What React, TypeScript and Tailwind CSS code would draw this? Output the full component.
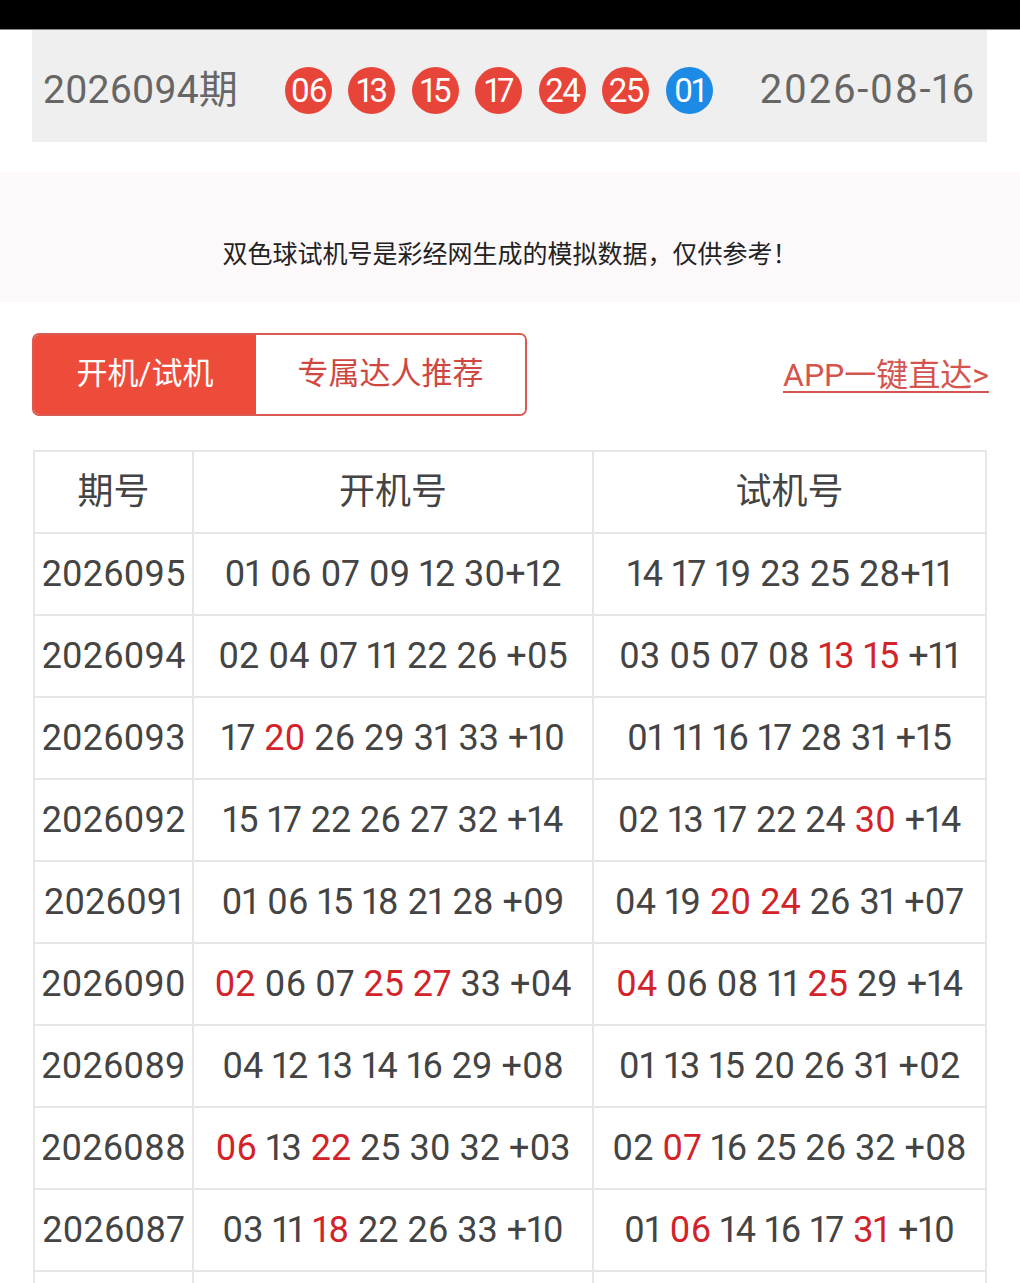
import React from "react";

type Cell = { n: string; hot?: boolean };

const font = { fontFamily: 'Roboto, "Noto Sans CJK SC", sans-serif' };

const reds = ["06", "13", "15", "17", "24", "25"];

function nums(s: string): Cell[] {
  // "*" marks a hit number
  return s.split(" ").map((t) => (t.startsWith("*") ? { n: t.slice(1), hot: true } : { n: t }));
}

const rows: { issue: string; open: Cell[]; test: Cell[] }[] = [
  { issue: "2026095", open: nums("01 06 07 09 12 30+12"), test: nums("14 17 19 23 25 28+11") },
  { issue: "2026094", open: nums("02 04 07 11 22 26 +05"), test: nums("03 05 07 08 *13 *15 +11") },
  { issue: "2026093", open: nums("17 *20 26 29 31 33 +10"), test: nums("01 11 16 17 28 31 +15") },
  { issue: "2026092", open: nums("15 17 22 26 27 32 +14"), test: nums("02 13 17 22 24 *30 +14") },
  { issue: "2026091", open: nums("01 06 15 18 21 28 +09"), test: nums("04 19 *20 *24 26 31 +07") },
  { issue: "2026090", open: nums("*02 06 07 *25 *27 33 +04"), test: nums("*04 06 08 11 *25 29 +14") },
  { issue: "2026089", open: nums("04 12 13 14 16 29 +08"), test: nums("01 13 15 20 26 31 +02") },
  { issue: "2026088", open: nums("*06 13 *22 25 30 32 +03"), test: nums("02 *07 16 25 26 32 +08") },
  { issue: "2026087", open: nums("03 11 *18 22 26 33 +10"), test: nums("01 *06 14 16 17 *31 +10") },
];

function NumLine({ cells }: { cells: Cell[] }) {
  return (
    <span className="whitespace-pre">
      {cells.map((c, i) => (
        <span key={i} className={c.hot ? "text-[#d3232a]" : ""}>
          {c.n}
          {i < cells.length - 1 ? " " : ""}
        </span>
      ))}
    </span>
  );
}

function Ball({ n, blue }: { n: string; blue?: boolean }) {
  return (
    <div
      className={`w-[47px] h-[47px] rounded-full flex items-center justify-center text-white text-[33px] leading-none tracking-[-1.5px] ${
        blue ? "bg-[#1d8ae6]" : "bg-[#e8453a]"
      }`}
    >
      {n}
    </div>
  );
}

export default function App() {
  const cell = "h-[82px] border-r-2 border-b-2 border-[#e6e6e6] flex items-center justify-center";

  return (
    <div className="w-[1020px] bg-white text-[#444] proportional-nums" style={font}>
      <div className="h-[30px] bg-black border-b border-[#888]" />

      <div className="mx-[32px] mr-[33px] h-[112px] bg-[#efefef] flex items-center px-[11px] pt-[8px] gap-[47px]">
        <div className="text-[39px] text-[#666] leading-none">2026094期</div>
        <div className="flex items-center gap-[16.5px]">
          {reds.map((r) => (
            <Ball key={r} n={r} />
          ))}
          <Ball n="01" blue />
        </div>
        <div className="text-[40px] text-[#666] leading-none tracking-[1.6px]">2026-08-16</div>
      </div>

      <div className="mt-[30px] h-[130px] bg-[#fdf9fb] flex justify-center pt-[66px]">
        <div className="text-[25px] text-[#222] leading-[34px] h-[34px]">
          双色球试机号是彩经网生成的模拟数据，仅供参考！
        </div>
      </div>

      <div className="mt-[31px] mx-[32px] flex items-center justify-between">
        <div className="flex h-[83px] w-[495px] rounded-[7px] border-2 border-[#d95a52] overflow-hidden">
          <div className="w-[222px] bg-[#ee4c3a] text-white text-[31px] flex items-center justify-center">
            开机/试机
          </div>
          <div className="flex-1 bg-white text-[#cf4740] text-[31px] flex items-center justify-center">
            专属达人推荐
          </div>
        </div>
        <a className="text-[32px] text-[#d4554f] underline underline-offset-[5px] decoration-2 -mr-[1px]">
          APP一键直达&gt;
        </a>
      </div>

      <div className="mt-[34px] ml-[33px] w-[954px] border-t-2 border-l-2 border-[#e6e6e6] grid grid-cols-[159px_400px_393px] text-[36px] leading-none">
        <div className={cell}>期号</div>
        <div className={cell}>开机号</div>
        <div className={cell}>试机号</div>
        {rows.map((r) => (
          <React.Fragment key={r.issue}>
            <div className={cell}>{r.issue}</div>
            <div className={cell}>
              <NumLine cells={r.open} />
            </div>
            <div className={cell}>
              <NumLine cells={r.test} />
            </div>
          </React.Fragment>
        ))}
        <div className={cell} />
        <div className={cell} />
        <div className={cell} />
      </div>
    </div>
  );
}
